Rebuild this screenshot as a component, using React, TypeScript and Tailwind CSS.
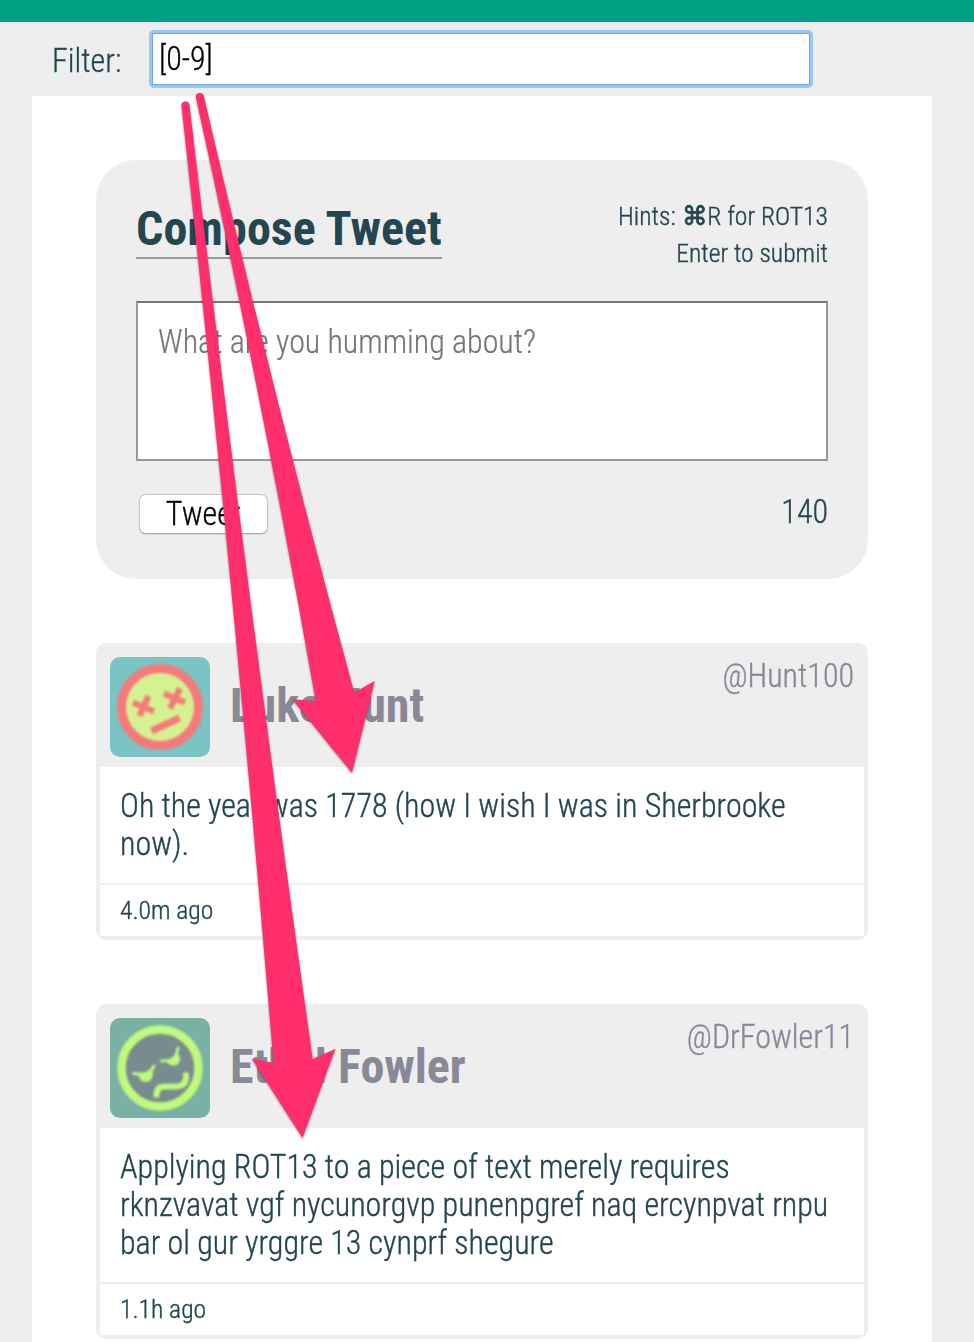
import React from "react";

type Tweet = {
  name: string;
  handle: string;
  lines: string[];
  age: string;
  avatar: React.ReactNode;
};

function DizzyAvatar() {
  return (
    <svg viewBox="0 0 100 100" className="size-[100px] shrink-0 rounded-[10px]">
      <rect width="100" height="100" fill="#7ac4c4" />
      <g className="blur-[0.8px]">
        <circle cx="50" cy="50" r="38.500" fill="#d4f291" stroke="#f67a79" strokeWidth="9" />
        <g stroke="#f67a79" strokeWidth="6.200">
          <path d="M23 45.500l21 9M38.500 39l-9 20" />
          <path d="M54 36.500l21 9M70 31.500l-10 20" />
          <path d="M41.500 74l28-13" strokeWidth="7.400" />
        </g>
      </g>
    </svg>
  );
}

function GrumpyAvatar() {
  return (
    <svg viewBox="0 0 100 100" className="size-[100px] shrink-0 rounded-[10px]">
      <rect width="100" height="100" fill="#79b1a4" />
      <g className="blur-[0.8px]">
        <circle cx="50" cy="50" r="38.500" fill="#788b8e" stroke="#c0f97b" strokeWidth="8.500" />
        <path
          d="M46.500 79.500v-2.500q0-8.500 8.500-8.500h10q11 0 11-9v-5"
          fill="none"
          stroke="#c0f97b"
          strokeWidth="6"
        />
        <g fill="none" stroke="#c0f97b" strokeWidth="3" strokeLinecap="round">
          <path d="M23.500 55.500q7 1 12 0 5-1.500 8.500-7.500" />
          <path d="M51.500 43q7 0 11-2 4-2 5.500-11" />
        </g>
        <g fill="#c0f97b">
          <path d="M28.500 57q6-.5 9-2 3-2 4.500-3.500 1.500 2 .5 7-1.500 5.500-7 5.500-6 0-7-7z" />
          <path d="M56.500 42.500q5-1 7.500-3 2-2 3-4 3.500 2 3 6-.5 6-6.500 6-5.500 0-7-5z" />
        </g>
      </g>
    </svg>
  );
}

const tweets: Tweet[] = [
  {
    name: "Luke Hunt",
    handle: "@Hunt100",
    lines: ["Oh the year was 1778 (how I wish I was in Sherbrooke", "now)."],
    age: "4.0m ago",
    avatar: <DizzyAvatar />,
  },
  {
    name: "Ethel Fowler",
    handle: "@DrFowler11",
    lines: [
      "Applying ROT13 to a piece of text merely requires",
      "rknzvavat vgf nycunorgvp punenpgref naq ercynpvat rnpu",
      "bar ol gur yrggre 13 cynprf shegure",
    ],
    age: "1.1h ago",
    avatar: <GrumpyAvatar />,
  },
];

function TweetCard({ tweet }: { tweet: Tweet }) {
  return (
    <article className="rounded-[10px] bg-[#eeeeee] px-1 pb-1">
      <header className="flex h-[124px] items-start pt-[14px] pr-[10px] pl-[10px] text-[#888899]">
        {tweet.avatar}
        <h3 className="mt-[21px] ml-5 text-[48px] leading-[56px] font-bold whitespace-nowrap">{tweet.name}</h3>
        <span className="ml-auto origin-[0_79%] scale-y-[1.03] text-[32px] leading-[38px] whitespace-nowrap [-webkit-text-stroke:0.35px]">
          {tweet.handle}
        </span>
      </header>
      <div className="bg-white px-5 pt-5 pb-5 text-[32px] leading-[38px]">
        {tweet.lines.map((line) => (
          <p key={line} className="origin-[0_79%] scale-y-[1.03] whitespace-nowrap [-webkit-text-stroke:0.35px]">
            {line}
          </p>
        ))}
      </div>
      <footer className="mt-[2px] h-[51px] bg-white px-5 pt-[10px] text-[25.6px] leading-[30px]">
        <p className="origin-[0_79%] scale-y-[1.02] [-webkit-text-stroke:0.35px]">{tweet.age}</p>
      </footer>
    </article>
  );
}

export default function App() {
  return (
    <div className="relative h-[1342px] w-[974px] overflow-hidden bg-[#eeeeee] font-['Roboto_Condensed','Roboto',sans-serif] font-light text-[#244651] [font-stretch:75%]">
      <div className="h-[22px] bg-[#00a087]" />
      <div className="flex h-[74px] items-start pt-2 pl-[52px]">
        <label className="mt-3 w-[97px] origin-[0_79%] scale-y-[1.03] text-[32px] leading-[38px] [-webkit-text-stroke:0.3px]">
          Filter:
        </label>
        <div className="h-[58px] w-[664px] rounded-[5px] bg-[#98c6f8] p-[3px]">
          <div className="h-full border border-[#76a7dc] bg-white pt-[6px] pl-[6px] text-[32px] leading-[38px] text-black">
            <p className="origin-[0_79%] scale-y-[1.03] [-webkit-text-stroke:0.3px]">[0-9]</p>
          </div>
        </div>
      </div>

      <main className="ml-8 flex w-[900px] flex-col gap-16 bg-white px-16 pt-16 pb-16">
        <section className="h-[419px] rounded-[40px] bg-[#eeeeee] px-10 pt-10">
          <div className="flex h-[101px] items-start justify-between">
            <h2 className="h-[59px] border-b-2 border-[#999999] pt-px text-[48px] leading-[56px] font-bold tracking-[0.07px] whitespace-nowrap">
              Compose Tweet
            </h2>
            <div className="-mt-[2px] text-right text-[25.6px] leading-[37px] whitespace-nowrap [-webkit-text-stroke:0.35px]">
              <p className="origin-[0_74%] scale-y-[1.02]">
                Hints: <span className="-mr-px ml-px [-webkit-text-stroke:0.8px]">⌘</span>R for ROT13
              </p>
              <p className="origin-[0_74%] scale-y-[1.02]">Enter to submit</p>
            </div>
          </div>
          <div className="h-[160px] border-2 border-[#999999] border-t-[#777777] bg-white px-5 pt-5 text-[32px] leading-[38px] text-[#757575]">
            <p className="origin-[0_79%] scale-y-[1.03] [-webkit-text-stroke:0.2px]">What are you humming about?</p>
          </div>
          <div className="mt-[33px] flex items-start justify-between">
            <button className="ml-[3px] h-10 w-[129px] rounded-[7px] border border-[#c3c3c3] border-b-[#aaaaaa] bg-white text-[32px] leading-[38px] text-black shadow-[0_1px_1px_rgba(0,0,0,0.1)]">
              <span className="block origin-[0_79%] scale-y-[1.03] [-webkit-text-stroke:0.3px]">Tweet</span>
            </button>
            <span className="-mt-px origin-[0_79%] scale-y-[1.03] text-[32px] leading-[38px] [-webkit-text-stroke:0.3px]">
              140
            </span>
          </div>
        </section>
        {tweets.map((tweet) => (
          <TweetCard key={tweet.handle} tweet={tweet} />
        ))}
      </main>

      <svg viewBox="0 0 974 1342" className="pointer-events-none absolute inset-0 h-[1342px] w-[974px]">
        <g fill="#ff2f6d" className="drop-shadow-[0_1px_1px_rgba(0,0,0,0.4)]">
          <path d="M196 98Q262.500 399 315.700 701L292.300 699.300L352 773L374.700 681L354.200 692.500Q273 394 203.800 96A4 4 0 0 0 196 98Z" />
          <path d="M181.500 106Q234 584 273.500 1063L251.700 1058.500L302.500 1138L335.300 1049L312.700 1059Q245 582 189.500 105A4 4 0 0 0 181.500 106Z" />
        </g>
      </svg>
    </div>
  );
}
